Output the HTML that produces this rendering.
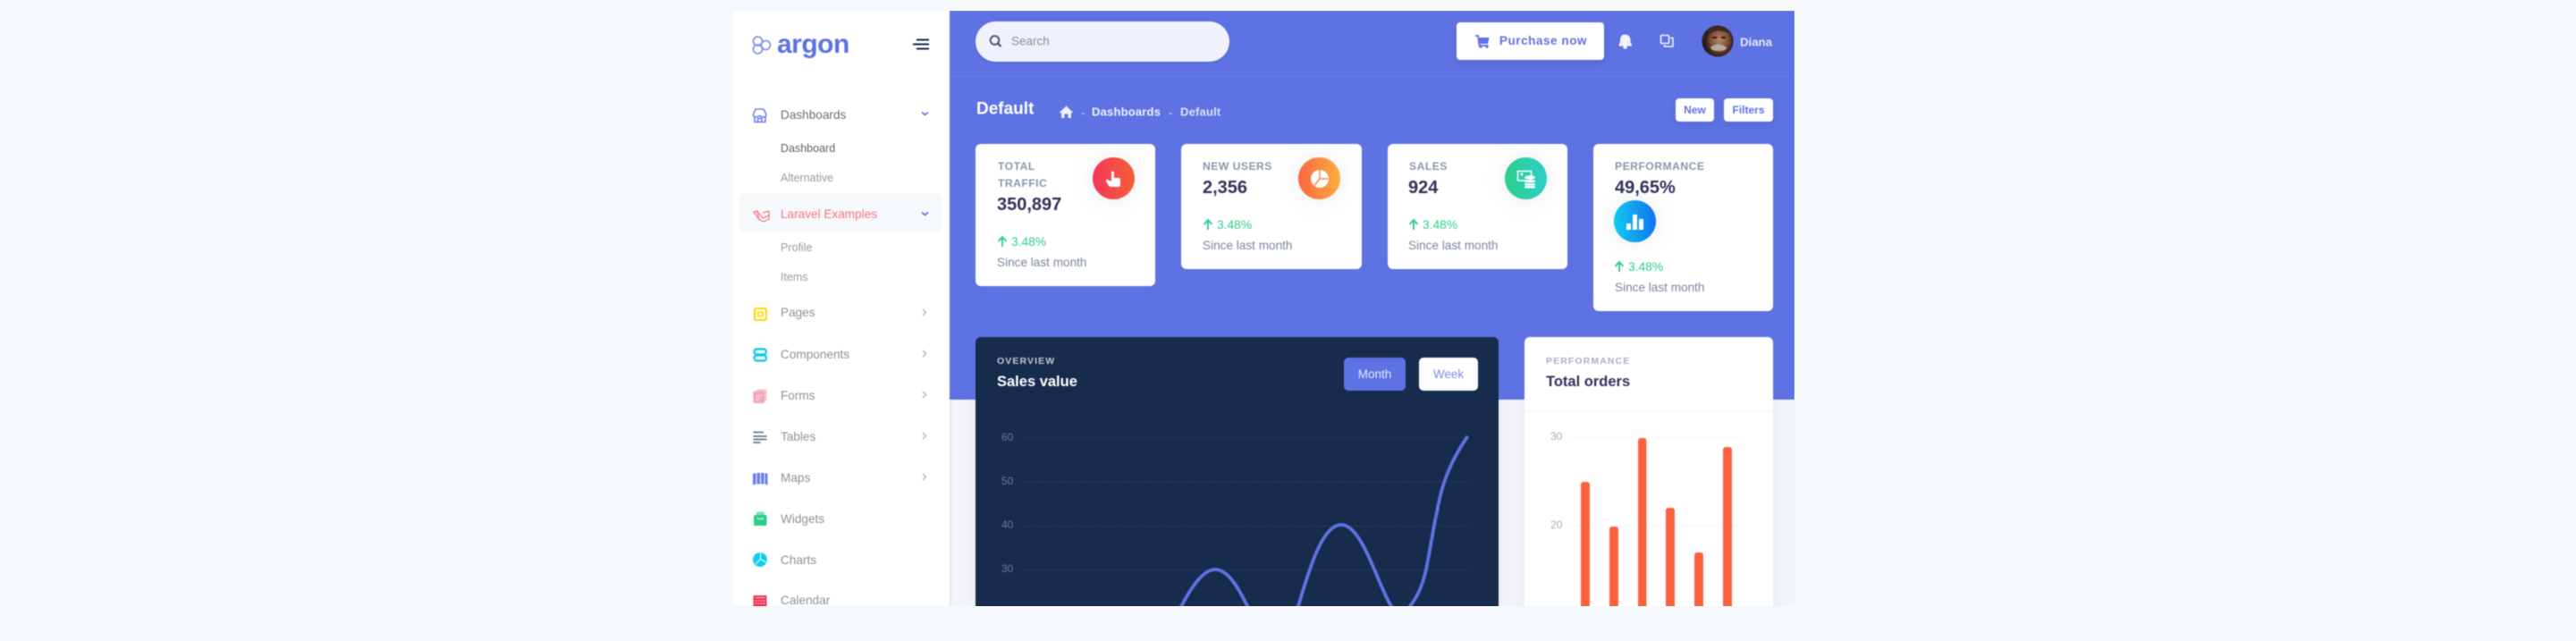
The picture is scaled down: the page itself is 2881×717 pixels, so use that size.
<!DOCTYPE html>
<html><head><meta charset="utf-8"><title>Argon Dashboard</title>
<style>
html,body{margin:0;padding:0;width:2881px;height:691px;overflow:hidden;background:#f5f9fc}
body{font-family:"Liberation Sans",sans-serif}
#f{position:absolute;left:0;top:0;width:2881px;height:691px;clip-path:inset(12px 874px 13px 819px);filter:blur(.6px);background:#f2f4fa}
.a{position:absolute}
.t{position:absolute;white-space:nowrap;transform:translateY(-50%);line-height:1;margin-top:1px}
.n{font-size:13.6px;color:#8f9194;left:873px}
.card{position:absolute;background:#fff;border-radius:6px;box-shadow:0 0 14px rgba(136,152,170,.1)}
.lab{font-size:12.2px;font-weight:bold;color:#8898aa;letter-spacing:.45px}
.val{font-size:20px;font-weight:bold;color:#32325d}
.pc{font-size:13.8px;color:#2dce89}
.sl{font-size:13.6px;color:#7a859d}
.c{position:absolute;width:47px;height:47px;border-radius:50%}
.btn{position:absolute;background:#fff;border-radius:4px;box-shadow:0 3px 8px rgba(50,50,93,.15);color:#5e72e4;font-weight:bold;text-align:center}
svg.o{position:absolute;left:0;top:0;width:2881px;height:691px}
</style></head><body>
<div id="f">
<div class="a" style="left:1062px;top:12px;width:945px;height:435px;background:#5e72e4"></div>
<div class="a" style="left:1062px;top:85px;width:945px;height:1px;background:rgba(255,255,255,.07)"></div>
<div class="a" style="left:819px;top:12px;width:243px;height:666px;background:#fff;box-shadow:0 0 4px rgba(136,152,170,.3)"></div>
<div class="a" style="left:827px;top:216px;width:226px;height:44px;border-radius:6px;background:#f6f9fc"></div>

<div class="t" style="left:869px;top:49px;font-size:30px;font-weight:bold;color:#5e72e4;letter-spacing:-.5px">argon</div>
<div class="t n" style="top:128px;color:#6c6e72">Dashboards</div>
<div class="t n" style="top:165px;font-size:12.5px;color:#5f6165">Dashboard</div>
<div class="t n" style="top:198px;font-size:12.5px;color:#9a9b9d">Alternative</div>
<div class="t n" style="top:239px;color:#f5767f">Laravel Examples</div>
<div class="t n" style="top:276px;font-size:12.5px;color:#9a9b9d">Profile</div>
<div class="t n" style="top:309px;font-size:12.5px;color:#9a9b9d">Items</div>
<div class="t n" style="top:349px">Pages</div>
<div class="t n" style="top:396px">Components</div>
<div class="t n" style="top:442px">Forms</div>
<div class="t n" style="top:488px">Tables</div>
<div class="t n" style="top:534px">Maps</div>
<div class="t n" style="top:580px">Widgets</div>
<div class="t n" style="top:626px">Charts</div>
<div class="t n" style="top:671px">Calendar</div>

<div class="a" style="left:1091px;top:24px;width:284px;height:45px;border-radius:23px;background:#eff1fc;box-shadow:0 1px 3px rgba(50,50,93,.15)"></div>
<div class="t" style="left:1131px;top:45px;font-size:13.5px;color:#8b8f9c">Search</div>
<div class="btn" style="left:1629px;top:25px;width:165px;height:42px;line-height:42px;font-size:13.5px;letter-spacing:.55px;text-indent:29px">Purchase now</div>
<div class="t" style="left:1946px;top:46px;font-size:13.2px;font-weight:bold;color:#e6e9fb">Diana</div>

<div class="t" style="left:1092px;top:121px;font-size:19px;font-weight:bold;color:#fff">Default</div>
<div class="t" style="left:1209px;top:125px;font-size:13px;font-weight:bold;color:#aab5f0">-</div>
<div class="t" style="left:1221px;top:124px;font-size:13px;font-weight:bold;color:#f0f2fd;letter-spacing:.2px">Dashboards</div>
<div class="t" style="left:1307px;top:125px;font-size:13px;font-weight:bold;color:#aab5f0">-</div>
<div class="t" style="left:1320px;top:124px;font-size:13px;font-weight:bold;color:#dee2f8;letter-spacing:.2px">Default</div>
<div class="btn" style="left:1874px;top:110px;width:43px;height:26px;line-height:26px;font-size:12px">New</div>
<div class="btn" style="left:1928px;top:110px;width:55px;height:26px;line-height:26px;font-size:12px">Filters</div>

<div class="card" style="left:1091px;top:161px;width:201px;height:159px"></div>
<div class="card" style="left:1321px;top:161px;width:202px;height:140px"></div>
<div class="card" style="left:1552px;top:161px;width:201px;height:140px"></div>
<div class="card" style="left:1782px;top:161px;width:201px;height:187px"></div>

<div class="c" style="left:1222px;top:176px;background:linear-gradient(87deg,#f5365c,#f56036);box-shadow:0 0 24px rgba(136,152,170,.2)"></div>
<div class="c" style="left:1452px;top:176px;background:linear-gradient(87deg,#fb6340,#fbb140);box-shadow:0 0 24px rgba(136,152,170,.2)"></div>
<div class="c" style="left:1683px;top:176px;background:linear-gradient(87deg,#2dce89,#2dcecc);box-shadow:0 0 24px rgba(136,152,170,.2)"></div>
<div class="c" style="left:1805px;top:224px;background:linear-gradient(87deg,#11cdef,#1171ef);box-shadow:0 0 24px rgba(136,152,170,.2)"></div>

<div class="t lab" style="left:1116px;top:185px">TOTAL</div>
<div class="t lab" style="left:1116px;top:204px">TRAFFIC</div>
<div class="t val" style="left:1115px;top:228px">350,897</div>
<div class="t pc" style="left:1131px;top:270px">3.48%</div>
<div class="t sl" style="left:1115px;top:293px">Since last month</div>

<div class="t lab" style="left:1345px;top:185px">NEW USERS</div>
<div class="t val" style="left:1345px;top:209px">2,356</div>
<div class="t pc" style="left:1361px;top:251px">3.48%</div>
<div class="t sl" style="left:1345px;top:274px">Since last month</div>

<div class="t lab" style="left:1576px;top:185px">SALES</div>
<div class="t val" style="left:1575px;top:209px">924</div>
<div class="t pc" style="left:1591px;top:251px">3.48%</div>
<div class="t sl" style="left:1575px;top:274px">Since last month</div>

<div class="t lab" style="left:1806px;top:185px">PERFORMANCE</div>
<div class="t val" style="left:1806px;top:209px">49,65%</div>
<div class="t pc" style="left:1821px;top:298px">3.48%</div>
<div class="t sl" style="left:1806px;top:321px">Since last month</div>

<div class="card" style="left:1091px;top:377px;width:585px;height:340px;background:#172b4d"></div>
<div class="card" style="left:1705px;top:377px;width:278px;height:340px"></div>
<div class="a" style="left:1705px;top:460px;width:278px;height:1px;background:#f4f5f8"></div>

<div class="t" style="left:1115px;top:403px;font-size:10.5px;font-weight:bold;color:#c3c9d3;letter-spacing:1.1px">OVERVIEW</div>
<div class="t" style="left:1115px;top:426px;font-size:16.5px;font-weight:bold;color:#fff">Sales value</div>
<div class="a" style="left:1503px;top:400px;width:69px;height:37px;line-height:37px;border-radius:5px;background:#5e72e4;color:#e6e9fb;font-size:13.5px;text-align:center">Month</div>
<div class="a" style="left:1587px;top:400px;width:66px;height:37px;line-height:37px;border-radius:5px;background:#fff;color:#7c8ce8;font-size:13.5px;text-align:center">Week</div>
<div class="t" style="left:1120px;top:488px;font-size:12px;color:#6d7a92">60</div>
<div class="t" style="left:1120px;top:537px;font-size:12px;color:#6d7a92">50</div>
<div class="t" style="left:1120px;top:586px;font-size:12px;color:#6d7a92">40</div>
<div class="t" style="left:1120px;top:635px;font-size:12px;color:#6d7a92">30</div>

<div class="t" style="left:1729px;top:403px;font-size:10.5px;font-weight:bold;color:#a6b1c0;letter-spacing:1.1px">PERFORMANCE</div>
<div class="t" style="left:1729px;top:426px;font-size:16.5px;font-weight:bold;color:#32325d">Total orders</div>
<div class="t" style="left:1734px;top:487px;font-size:12px;color:#a0adbd">30</div>
<div class="t" style="left:1734px;top:586px;font-size:12px;color:#a0adbd">20</div>

<svg class="o" viewBox="0 0 2881 691" xmlns="http://www.w3.org/2000/svg">
<!-- logo -->
<g fill="none" stroke="#8594ec" stroke-width="1.8"><circle cx="847.5" cy="46" r="5"/><circle cx="847.5" cy="55" r="5"/><circle cx="856.5" cy="50.5" r="5"/></g>
<!-- hamburger -->
<g stroke="#172b4d" stroke-width="2"><path d="M1025 44.500H1039M1021 49.500H1039M1025 54.500H1039"/></g>
<!-- store -->
<g fill="none" stroke="#6f82e8" stroke-width="1.6"><path d="M845 122H854L857 128Q857 131 854.500 131Q851.500 131 849.500 129.500Q847 131 845 131Q842.500 131 842.500 128Z"/><path d="M844 131V136.500H856V131M847.500 136V132.500H852V136"/></g>
<!-- laravel -->
<g fill="none" stroke="#f5767f" stroke-width="1.200"><path d="M843 237L847 236L853 244L860 241V245L854 248L849 245.500ZM847 236L849 245.500M853 238L860 236V241L855 243.500"/></g>
<!-- pages -->
<g fill="none" stroke="#ffd600" stroke-width="2"><rect x="844" y="345" width="13" height="13" rx="1.500"/><rect x="848" y="349" width="5" height="4.500" stroke-width="1.500"/></g><path d="M843 348h3M843 351h3M843 354h3" stroke="#ffd600"/>
<!-- components -->
<g fill="none" stroke="#11cdef" stroke-width="2.400"><rect x="843.500" y="390.500" width="13.500" height="6" rx="3"/><rect x="843.500" y="397.500" width="13.500" height="6" rx="3"/></g>
<!-- forms -->
<rect x="846" y="435.500" width="11.500" height="13" rx="1" fill="#fbc1cf"/><rect x="842.500" y="437.500" width="12.500" height="13.500" rx="1" fill="#f7a5b8"/><path d="M845.500 442.500h7M845.500 445h5M845.500 447.500h3" stroke="#fde2e9" stroke-width="1"/>
<!-- tables -->
<path d="M842.500 483.500H854M842.500 488H857.500M842.500 491.500H857.500M842.500 495H850.500" stroke="#68778f" stroke-width="1.700" fill="none"/>
<!-- maps -->
<g fill="#6a7deb"><path d="M842 530L845.500 529V541.500L842 542.500Z"/><rect x="846.500" y="529" width="3.500" height="12.500"/><rect x="851" y="529" width="3.500" height="12.500"/><path d="M855.500 529L858.500 530V542.500L855.500 541.500Z"/></g>
<!-- widgets -->
<path d="M846 577V574Q846 572.500 848 572.500H853Q855 572.500 855 574V577Z" fill="#7fdcb5"/><rect x="843" y="576" width="14.500" height="12" rx="1.500" fill="#2dce89"/><path d="M847.500 578.500V580.500H853V578.500" stroke="#d6f5e7" fill="none" stroke-width="1"/>
<!-- charts -->
<circle cx="850" cy="626" r="8" fill="#11cdef"/><path d="M850.500 618V625.500L857 629M850.500 625.500L845 631" stroke="#fff" fill="none" stroke-width="1"/>
<!-- calendar -->
<rect x="842.500" y="666" width="15" height="14" rx="1" fill="#f5365c"/><path d="M845 668.500h10" stroke="#fff" stroke-width=".7"/><path d="M844.500 672h11M844.500 675h11" stroke="#fcc" stroke-width="1" stroke-dasharray="2 1"/>
<!-- chevrons -->
<g fill="none" stroke="#5e72e4" stroke-width="1.800"><path d="M1031 125.500L1034.500 128.500L1038 125.500"/><path d="M1031 237.500L1034.500 240.500L1038 237.500"/></g>
<g fill="none" stroke="#bcc3cf" stroke-width="1.800"><path d="M1032 346L1035.500 349.500L1032 353"/><path d="M1032 392L1035.500 395.500L1032 399"/><path d="M1032 438L1035.500 441.500L1032 445"/><path d="M1032 484L1035.500 487.500L1032 491"/><path d="M1032 530L1035.500 533.500L1032 537"/></g>
<!-- search -->
<circle cx="1112.500" cy="45" r="4.800" fill="none" stroke="#4c5564" stroke-width="1.900"/><path d="M1116 48.500L1119.500 52" stroke="#4c5564" stroke-width="2.200"/>
<!-- cart -->
<path d="M1650 40H1653L1654.500 51H1664.500" fill="none" stroke="#5e72e4" stroke-width="1.800"/><path d="M1654 42H1665.500L1664 49H1655Z" fill="#5e72e4"/><circle cx="1656" cy="52" r="1.700" fill="#5e72e4"/><circle cx="1663" cy="52" r="1.700" fill="#5e72e4"/>
<!-- bell -->
<path d="M1817.500 38.500C1821.500 38.500 1823.500 41.500 1823.500 45C1823.500 48.500 1825 49.500 1825 50.500V51.500H1810.500V50.500C1810.500 49.500 1812 48.500 1812 45C1812 41.500 1813.500 38.500 1817.500 38.500Z" fill="#f1f3fd"/><circle cx="1817.500" cy="52.500" r="2.300" fill="#f1f3fd"/>
<!-- copy -->
<g fill="none" stroke="#f1f3fd" stroke-width="1.600"><rect x="1857.500" y="39.500" width="9" height="9" rx="1"/><path d="M1868 42.500H1871V52H1861.500V50"/></g>
<!-- avatar -->
<defs><clipPath id="av"><circle cx="1921" cy="46" r="17.500"/></clipPath><radialGradient id="fc" cx=".5" cy=".45" r=".5"><stop offset="0" stop-color="#b98468"/><stop offset=".7" stop-color="#7f4f36"/><stop offset="1" stop-color="#4a2a1c"/></radialGradient></defs>
<g clip-path="url(#av)"><rect x="1903" y="28" width="36" height="36" fill="#2c211c"/><ellipse cx="1923" cy="46" rx="14" ry="16" fill="url(#fc)"/><path d="M1909 34Q1920 25 1935 33L1933 37Q1920 31 1912 38Z" fill="#3a2a22"/><path d="M1913 53Q1921 46 1931 53Q1931 57 1922 57Q1914 57 1913 53Z" fill="#b7aaa0"/><path d="M1915 42h5M1925 42h5" stroke="#2c1a12" stroke-width="2"/><path d="M1904 40Q1907 58 1912 62H1903Z" fill="#1d1613"/></g>
<!-- home -->
<path d="M1192.500 118.500L1200.500 126H1198V132H1194.500V127.500H1190.500V132H1187V126H1184.500Z" fill="#eef0fd"/>
<!-- card arrows -->
<g fill="none" stroke="#2dce89" stroke-width="1.900"><path d="M1121 276V265M1116.500 270L1121 265L1125.500 270"/><path d="M1351 257V246M1346.500 251L1351 246L1355.500 251"/><path d="M1581 257V246M1576.500 251L1581 246L1585.500 251"/><path d="M1811 304V293M1806.500 298L1811 293L1815.500 298"/></g>
<!-- hand -->
<path d="M1243 193Q1243 191.500 1244.500 191.500Q1246 191.500 1246 193V199H1251Q1253 199 1253 201V206Q1253 209 1251 209H1243Q1241 209 1240 207.500L1237 203Q1236.500 201 1238 200.500L1240 201.500L1243 203Z" fill="#fff"/>
<!-- pie -->
<circle cx="1476" cy="200" r="10" fill="#fff"/><path d="M1476 190V200L1485.500 200M1476 200L1470 207.500" stroke="#fb8a40" stroke-width="1.500" fill="none"/>
<!-- screen + coins -->
<g fill="none" stroke="#fff" stroke-width="1.500"><rect x="1697.500" y="191.500" width="15" height="10.500"/></g><circle cx="1702" cy="195" r="1.500" fill="#fff"/>
<g fill="#fff"><ellipse cx="1711" cy="198.500" rx="6" ry="2.200"/><rect x="1705" y="201.500" width="12" height="2.500" rx="1.200"/><rect x="1705" y="205" width="12" height="2.500" rx="1.200"/><rect x="1705" y="208" width="12" height="2.500" rx="1.200"/></g>
<!-- bars icon -->
<g fill="#fff"><rect x="1819" y="250" width="5" height="7"/><rect x="1826" y="240" width="5" height="17"/><rect x="1833" y="245" width="5" height="12"/></g>
<!-- dark chart -->
<g stroke="#34476a" stroke-width="1" stroke-dasharray="1.500 1.500"><path d="M1145 489.500H1642M1145 539H1642M1145 588.500H1642M1145 637.500H1642"/></g>
<path d="M1300 720C1312 700 1335 637 1359 637C1380 637 1395 680 1412 712" fill="none" stroke="#5e72e4" stroke-width="3.800"/>
<path d="M1440 712C1445 700 1449 690 1452 678C1466 630 1480 587 1500 587C1524 587 1541 655 1556 678C1563 692 1570 690 1577 678C1585 668 1591 655 1595 637C1600 612 1603 590 1607 573C1611 550 1616 535 1623 520C1630 505 1635 497 1641.600 488" fill="none" stroke="#5e72e4" stroke-width="3.800"/>
<!-- bars chart -->
<g stroke="#eceef2" stroke-width="1" stroke-dasharray="1.500 2"><path d="M1759 489.500H1948M1759 588.500H1948"/></g>
<g fill="#fb6340"><rect x="1768" y="539" width="10" height="160" rx="3"/><rect x="1800" y="589" width="10" height="120" rx="3"/><rect x="1832" y="490" width="9.500" height="210" rx="3"/><rect x="1863" y="568" width="10" height="140" rx="3"/><rect x="1895" y="618" width="10" height="80" rx="3"/><rect x="1927" y="500" width="10" height="200" rx="3"/></g>
</svg>
</div>
</body></html>
